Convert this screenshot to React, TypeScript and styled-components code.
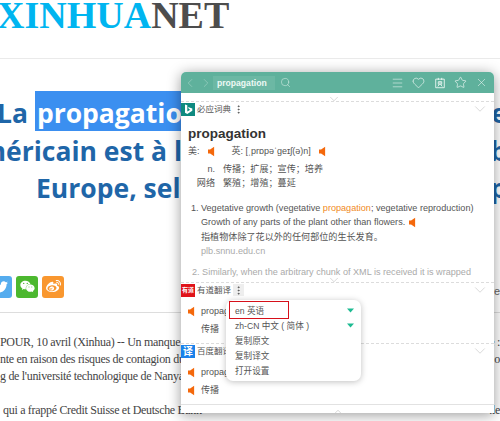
import React from "react";
import styled, { createGlobalStyle } from "styled-components";
import { ChevronLeft, ChevronRight, Search, Menu, Heart, Star, X, ChevronDown, ChevronUp, MoreVertical } from "lucide-react";
import { FaTwitter, FaWeixin, FaWeibo } from "react-icons/fa";

const GlobalStyle = createGlobalStyle`
    html, body {
        margin: 0;
        padding: 0;
        background: #fff;
    }
`;

const SANS = `"Liberation Sans", "Noto Sans CJK SC", sans-serif`;

function Speaker() {
    return (
        <SpeakerIcon viewBox="0 0 8 12">
            <path d="M0 3.8h2.4L7 .6v10.8L2.4 8.2H0z" fill="#f4680b" />
        </SpeakerIcon>
    );
}

function BookIcon() {
    return (
        <svg width="12" height="12" viewBox="0 0 14 14" fill="none" stroke="#f2faf7" strokeWidth="1">
            <path d="M2 2.500v10h10v-10zM5 1v2.500M9 1v2.500M5 5.500h4v3H5zM7 5.500v3M4.500 11l1.500-2M9.500 11l-1.500-2" />
        </svg>
    );
}

function DropMark() {
    return (
        <svg width="7" height="5" viewBox="0 0 7 5">
            <path d="M0 .5h7L3.500 4.500z" fill="#1dbb92" />
        </svg>
    );
}

function BingLogo() {
    return (
        <svg width="14" height="13" viewBox="0 0 14 13">
            <rect width="14" height="13" fill="#0f8a80" />
            <path d="M4 1.500l2.300.8v6.200l3-1.700-1.400-.7-.9-2.200 4.300 1.500v2.300L6.300 11 4 9.700z" fill="#fff" />
        </svg>
    );
}

type SectionProps = {
    mark: React.ReactNode;
    title: string;
    active?: boolean;
    children: React.ReactNode;
};

function Section({ mark, title, active, children }: SectionProps) {
    return (
        <SectionWrap>
            <SectionFold><ChevronDown size={14} strokeWidth={1} /></SectionFold>
            <SectionHead>
                {mark}
                <SectionTitle>{title}</SectionTitle>
                <Dots $active={active}><MoreVertical size={11} strokeWidth={2} /></Dots>
                <HeadChevron><ChevronDown size={18} strokeWidth={1} /></HeadChevron>
            </SectionHead>
            {children}
        </SectionWrap>
    );
}

export default function App() {
    return (
        <Page>
            <GlobalStyle />
            <Masthead>
                <Logo>XINHUA<LogoDark>NET</LogoDark></Logo>
            </Masthead>
            <Headline>
                <HeadRow $indent={-3}>
                    <span>La <Selected>propagation</Selected></span>
                    <span>e</span>
                </HeadRow>
                <HeadRow $indent={-20}>
                    <span>méricain est à l</span>
                    <span>b</span>
                </HeadRow>
                <HeadRow $indent={36}>
                    <span>Europe, selon</span>
                    <span>p</span>
                </HeadRow>
            </Headline>
            <ShareBar>
                <ShareButton $tone="#55acee"><FaTwitter size={14} /></ShareButton>
                <ShareButton $tone="#4cb82f"><FaWeixin size={15} /></ShareButton>
                <ShareButton $tone="#f9972f"><FaWeibo size={15} /></ShareButton>
                <ShareLabel>re</ShareLabel>
            </ShareBar>
            <Article>
                <ArticleLine><span>POUR, 10 avril (Xinhua) -- Un manque de</span><span>e :</span></ArticleLine>
                <ArticleLine><span>nte en raison des risques de contagion du</span><span>o</span></ArticleLine>
                <ArticleLine><span>g de l'université technologique de Nanyang</span></ArticleLine>
                <ArticleGap />
                <ArticleLine $inset><span>qui a frappé Credit Suisse et Deutsche Bank</span><span>.le</span></ArticleLine>
            </Article>

            <Panel>
                <PanelBar>
                    <NavGroup>
                        <ChevronLeft size={14} strokeWidth={1.200} />
                        <ChevronRight size={14} strokeWidth={1.200} />
                    </NavGroup>
                    <QueryField>propagation</QueryField>
                    <Search size={11} strokeWidth={1.200} />
                    <ToolGroup>
                        <ToolCell><Menu size={14} strokeWidth={1} /></ToolCell>
                        <ToolCell><Heart size={13} strokeWidth={1.200} /></ToolCell>
                        <ToolCell><BookIcon /></ToolCell>
                        <ToolCell><Star size={13} strokeWidth={1.200} /></ToolCell>
                        <ToolCell><X size={19} strokeWidth={1} /></ToolCell>
                    </ToolGroup>
                </PanelBar>
                <PanelBody>
                    <Section mark={<LogoMark><BingLogo /></LogoMark>} title="必应词典">
                        <WordTitle>propagation</WordTitle>
                        <PhoneticRow>
                            <span>美:</span>
                            <Speaker />
                            <BritishLabel>英: [ˌprɒpəˈgeɪʃ(ə)n]</BritishLabel>
                            <Speaker />
                        </PhoneticRow>
                        <MeaningRow><Part>n.</Part><span>传播；扩展；宣传；培养</span></MeaningRow>
                        <MeaningRow><Part>网络</Part><span>繁殖；增殖；蔓延</span></MeaningRow>
                        <DefinitionList>
                            <Definition>
                                <li>Vegetative growth (vegetative <Hit>propagation</Hit>; vegetative reproduction)</li>
                                <DefLine>Growth of any parts of the plant other than flowers. <Speaker /></DefLine>
                                <DefLine>指植物体除了花以外的任何部位的生长发育。</DefLine>
                                <Source>plb.snnu.edu.cn</Source>
                            </Definition>
                            <Faded>2. Similarly, when the arbitrary chunk of XML is received it is wrapped</Faded>
                        </DefinitionList>
                    </Section>
                    <Section mark={<Mark $tone="#e0131a" $size={6}>有道</Mark>} title="有道翻译" active>
                        <ResultList>
                            <ResultRow><Speaker /><span>propag</span></ResultRow>
                            <ResultRow><SpeakerGap />传播</ResultRow>
                        </ResultList>
                    </Section>
                    <Section mark={<Mark $tone="#1a82ea" $size={10}>译</Mark>} title="百度翻译">
                        <ResultList>
                            <ResultRow><Speaker /><span>propag</span></ResultRow>
                            <ResultRow><Speaker /><span>传播</span></ResultRow>
                        </ResultList>
                    </Section>
                </PanelBody>
                <PanelFoot><ChevronUp size={14} strokeWidth={1} /></PanelFoot>
                <LangMenu>
                    <MenuItem $boxed>en 英语<DropMark /></MenuItem>
                    <MenuItem>zh-CN 中文 ( 简体 )<DropMark /></MenuItem>
                    <MenuItem>复制原文</MenuItem>
                    <MenuItem>复制译文</MenuItem>
                    <MenuItem>打开设置</MenuItem>
                </LangMenu>
            </Panel>
        </Page>
    );
}

const Page = styled.div`
    position: relative;
    width: 500px;
    height: 421px;
    overflow: hidden;
    background: #fff;
`;

const Masthead = styled.header`
    height: 58px;
    border-bottom: 1px solid #eaeaea;
    overflow: hidden;
`;

const Logo = styled.div`
    margin-left: -3px;
    font: bold 38px/31px "Liberation Serif", serif;
    color: #00b5f0;
    white-space: nowrap;
`;

const LogoDark = styled.span`
    color: #4d4d4d;
`;

const Headline = styled.h1`
    margin: 36px 0 0;
    font: bold 26.500px/37.500px "Open Sans", sans-serif;
    color: #1f66a8;
`;

const HeadRow = styled.div<{ $indent: number }>`
    display: flex;
    justify-content: space-between;
    width: ${(p) => 507 - p.$indent}px;
    margin-left: ${(p) => p.$indent}px;
    white-space: nowrap;
`;

const Selected = styled.span`
    background: #3b8ff0;
    color: #fff;
    padding: 4px 2px 0;
`;

const ShareBar = styled.div`
    display: flex;
    gap: 4px;
    height: 22px;
    margin: 68px 0 0 -10px;
`;

const ShareButton = styled.div<{ $tone: string }>`
    display: flex;
    align-items: center;
    justify-content: center;
    width: 22px;
    height: 22px;
    border-radius: 3px;
    background: ${(p) => p.$tone};
    color: #fff;
`;

const ShareLabel = styled.span`
    margin-left: auto;
    font: 11px/30px ${SANS};
    color: #666;
`;

const Article = styled.article`
    margin-top: 14px;
    padding-top: 21px;
    border-top: 1px solid #ddd;
    font: 12px/17px "Liberation Serif", serif;
    letter-spacing: -0.300px;
    color: #444;
    white-space: nowrap;
`;

const ArticleLine = styled.div<{ $inset?: boolean }>`
    display: flex;
    justify-content: space-between;
    height: 17px;
    padding-left: ${(p) => (p.$inset ? 3 : 0)}px;
`;

const ArticleGap = styled.div`
    height: 17px;
`;

const Panel = styled.section`
    position: absolute;
    left: 181px;
    top: 72px;
    width: 313px;
    height: 341px;
    display: flex;
    flex-direction: column;
    border-radius: 5px 5px 0 0;
    background: #fff;
    box-shadow: 0 2px 14px rgba(0, 0, 0, 0.4);
    font-family: ${SANS};
    color: #555;
`;

const PanelBar = styled.div`
    flex: none;
    display: flex;
    align-items: center;
    height: 21px;
    padding: 0 6px 0 2px;
    border-radius: 5px 5px 0 0;
    background: #5fb19c;
    color: #d8efe8;
`;

const NavGroup = styled.div`
    display: flex;
    gap: 2px;
    opacity: 0.500;
`;

const QueryField = styled.div`
    width: 58px;
    margin-right: 5px;
    padding-left: 4px;
    background: #6cb8a4;
    color: #eef8f5;
    font-size: 8.600px;
    font-weight: bold;
    line-height: 14px;
`;

const ToolGroup = styled.div`
    display: flex;
    align-items: center;
    gap: 8px;
    margin-left: auto;
    color: #f2faf7;
`;

const ToolCell = styled.span`
    display: flex;
    align-items: center;
    justify-content: center;
    width: 13px;
`;

const PanelBody = styled.div`
    flex: 1;
    min-height: 0;
    padding-top: 8px;
    overflow: hidden;
`;

const SectionWrap = styled.div`
    position: relative;
    border-top: 1px dashed #dcdcdc;
`;

const SectionFold = styled.div`
    position: absolute;
    left: 146px;
    top: -10px;
    display: flex;
    color: #bbb;
`;

const SectionHead = styled.div`
    display: flex;
    align-items: center;
    height: 14px;
    font-size: 8.500px;
    line-height: 12px;
`;

const LogoMark = styled.span`
    display: flex;
    flex: none;
    margin-right: 2px;
`;

const Mark = styled.span<{ $tone: string; $size: number }>`
    flex: none;
    width: 14px;
    height: 13px;
    margin-right: 2px;
    background: ${(p) => p.$tone};
    color: #fff;
    font-size: ${(p) => p.$size}px;
    line-height: 13px;
    font-weight: bold;
    text-align: center;
    white-space: nowrap;
    overflow: hidden;
`;

const SectionTitle = styled.span`
    color: #555;
`;

const Dots = styled.span<{ $active?: boolean }>`
    display: flex;
    align-items: center;
    height: 12px;
    margin-left: 2px;
    background: ${(p) => (p.$active ? "#eee" : "transparent")};
`;

const HeadChevron = styled.span`
    display: flex;
    margin: 0 5px 0 auto;
    color: #ccc;
`;

const WordTitle = styled.div`
    margin: 9px 0 0 7px;
    font-size: 13.500px;
    line-height: 18px;
    font-weight: bold;
    color: #333;
`;

const PhoneticRow = styled.div`
    display: flex;
    align-items: center;
    gap: 8px;
    height: 18px;
    margin: -1px 0 0 7px;
    font-size: 9px;
    line-height: 12px;
`;

const BritishLabel = styled.span`
    margin-left: 9px;
`;

const SpeakerIcon = styled.svg`
    flex: none;
    width: 7px;
    height: 11px;
    vertical-align: -1px;
`;

const MeaningRow = styled.div`
    display: flex;
    align-items: center;
    gap: 8px;
    height: 14px;
    margin-top: 2px;
    font-size: 9.100px;
    line-height: 12px;

    & + & {
        margin-top: 0;
    }
`;

const Part = styled.b`
    width: 34px;
    text-align: right;
    font-weight: normal;
`;

const DefinitionList = styled.div`
    margin: 11px 0 3px 11px;
    font-size: 9.100px;
    line-height: 14.300px;
    white-space: nowrap;
`;

const Definition = styled.ol`
    margin: 0;
    padding: 0 0 0 9px;
`;

const DefLine = styled.div`
    display: flex;
    align-items: center;
    gap: 4px;
`;

const Hit = styled.span`
    color: #f08a24;
`;

const Source = styled.div`
    color: #aaa;
`;

const Faded = styled.div`
    margin-top: 7px;
    color: #aaa;
`;

const ResultList = styled.div`
    padding: 5px 0;
`;

const ResultRow = styled.div`
    display: flex;
    align-items: center;
    gap: 6px;
    height: 18px;
    margin-left: 7px;
    font-size: 9px;
    line-height: 12px;
`;

const SpeakerGap = styled.span`
    width: 7px;
`;

const PanelFoot = styled.div`
    flex: none;
    display: flex;
    justify-content: center;
    height: 8px;
    overflow: hidden;
    border-top: 1px solid #e2e2e2;
    color: #bbb;
`;

const LangMenu = styled.div`
    position: absolute;
    left: 45px;
    top: 228px;
    display: flex;
    flex-direction: column;
    width: 135px;
    padding: 3px 7px 3px 3px;
    box-sizing: border-box;
    border-radius: 7px;
    background: #fff;
    box-shadow: 0 1px 6px rgba(0, 0, 0, 0.25);
    font-size: 8.600px;
    line-height: 12px;
    color: #555;
`;

const MenuItem = styled.div<{ $boxed?: boolean }>`
    position: relative;
    display: flex;
    align-items: center;
    justify-content: space-between;
    height: 15px;
    padding-left: 6px;

    ${(p) =>
        p.$boxed &&
        `
        &::after {
            content: "";
            position: absolute;
            left: 0;
            top: -2px;
            width: 58px;
            height: 16px;
            border: 1px solid #d6101a;
        }
    `}
`;
